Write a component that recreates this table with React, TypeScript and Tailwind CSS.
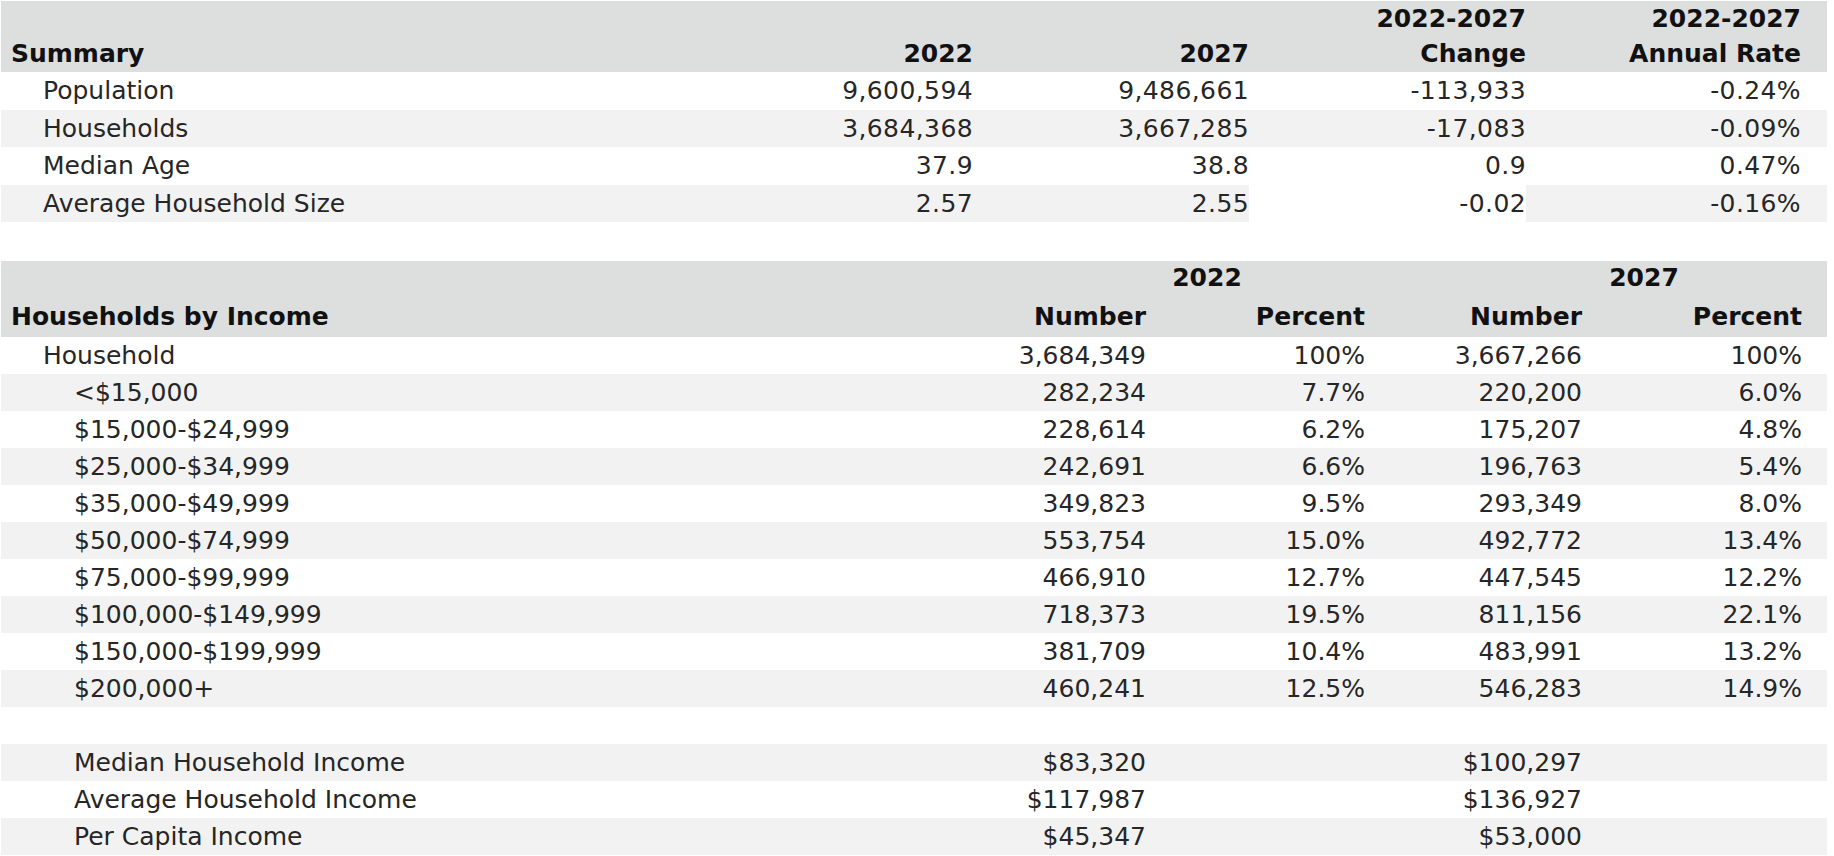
const font = "font-['DejaVu_Sans','Verdana',sans-serif]"

const summaryCols = 'grid grid-cols-[696px_276px_276px_277px_301px]'
const incomeCols = 'grid grid-cols-[926px_219px_219px_217px_245px]'

type SummaryRow = {
  label: string
  v2022: string
  v2027: string
  change: string
  rate: string
}

const summaryRows: SummaryRow[] = [
  { label: 'Population', v2022: '9,600,594', v2027: '9,486,661', change: '-113,933', rate: '-0.24%' },
  { label: 'Households', v2022: '3,684,368', v2027: '3,667,285', change: '-17,083', rate: '-0.09%' },
  { label: 'Median Age', v2022: '37.9', v2027: '38.8', change: '0.9', rate: '0.47%' },
  { label: 'Average Household Size', v2022: '2.57', v2027: '2.55', change: '-0.02', rate: '-0.16%' },
]

type IncomeRow = {
  label: string
  indent: 'pl-[42px]' | 'pl-[73px]'
  n2022: string
  p2022: string
  n2027: string
  p2027: string
}

const incomeRows: IncomeRow[] = [
  { label: 'Household', indent: 'pl-[42px]', n2022: '3,684,349', p2022: '100%', n2027: '3,667,266', p2027: '100%' },
  { label: '<$15,000', indent: 'pl-[73px]', n2022: '282,234', p2022: '7.7%', n2027: '220,200', p2027: '6.0%' },
  { label: '$15,000-$24,999', indent: 'pl-[73px]', n2022: '228,614', p2022: '6.2%', n2027: '175,207', p2027: '4.8%' },
  { label: '$25,000-$34,999', indent: 'pl-[73px]', n2022: '242,691', p2022: '6.6%', n2027: '196,763', p2027: '5.4%' },
  { label: '$35,000-$49,999', indent: 'pl-[73px]', n2022: '349,823', p2022: '9.5%', n2027: '293,349', p2027: '8.0%' },
  { label: '$50,000-$74,999', indent: 'pl-[73px]', n2022: '553,754', p2022: '15.0%', n2027: '492,772', p2027: '13.4%' },
  { label: '$75,000-$99,999', indent: 'pl-[73px]', n2022: '466,910', p2022: '12.7%', n2027: '447,545', p2027: '12.2%' },
  { label: '$100,000-$149,999', indent: 'pl-[73px]', n2022: '718,373', p2022: '19.5%', n2027: '811,156', p2027: '22.1%' },
  { label: '$150,000-$199,999', indent: 'pl-[73px]', n2022: '381,709', p2022: '10.4%', n2027: '483,991', p2027: '13.2%' },
  { label: '$200,000+', indent: 'pl-[73px]', n2022: '460,241', p2022: '12.5%', n2027: '546,283', p2027: '14.9%' },
]

const incomeSummary = [
  { label: 'Median Household Income', n2022: '$83,320', n2027: '$100,297' },
  { label: 'Average Household Income', n2022: '$117,987', n2027: '$136,927' },
  { label: 'Per Capita Income', n2022: '$45,347', n2027: '$53,000' },
]

function SummaryTable() {
  return (
    <div>
      <div className={`${summaryCols} h-[71px] items-end bg-[#dddede] pb-[3px] font-bold text-[#111]`}>
        <div className="pl-[10px] leading-[35px]">Summary</div>
        <div className="text-right leading-[35px]">2022</div>
        <div className="text-right leading-[35px]">2027</div>
        <div className="text-right leading-[35px]">
          2022-2027
          <br />
          Change
        </div>
        <div className="pr-[26px] text-right leading-[35px]">
          2022-2027
          <br />
          Annual Rate
        </div>
      </div>
      {summaryRows.map((row, i) => {
        const striped = i % 2 === 1
        const last = i === summaryRows.length - 1
        return (
          <div
            key={row.label}
            className={`${summaryCols} h-[37.5px] items-center ${striped ? 'bg-[#f2f2f2]' : 'bg-white'}`}
          >
            <div className="pl-[42px]">{row.label}</div>
            <div className="text-right tracking-[0.4px]">{row.v2022}</div>
            <div className="text-right tracking-[0.4px]">{row.v2027}</div>
            <div className={`flex h-full items-center justify-end tracking-[0.4px] ${last ? 'bg-white' : ''}`}>
              {row.change}
            </div>
            <div className="pr-[26px] text-right tracking-[0.4px]">{row.rate}</div>
          </div>
        )
      })}
    </div>
  )
}

function IncomeTable() {
  return (
    <div>
      <div className={`${incomeCols} h-[33px] items-end bg-[#dddede] font-bold text-[#111]`}>
        <div />
        <div className="col-span-2 pl-[122px] text-center leading-[33px]">2022</div>
        <div className="col-span-2 pl-[96px] text-center leading-[33px]">2027</div>
      </div>
      <div className={`${incomeCols} h-[43px] items-end bg-[#dddede] pb-[2px] font-bold text-[#111]`}>
        <div className="pl-[10px] leading-[37px]">Households by Income</div>
        <div className="text-right leading-[37px]">Number</div>
        <div className="text-right leading-[37px]">Percent</div>
        <div className="text-right leading-[37px]">Number</div>
        <div className="pr-[25px] text-right leading-[37px]">Percent</div>
      </div>
      {incomeRows.map((row, i) => (
        <div
          key={row.label}
          className={`${incomeCols} h-[37px] items-center ${i % 2 === 1 ? 'bg-[#f2f2f2]' : 'bg-white'}`}
        >
          <div className={row.indent}>{row.label}</div>
          <div className="text-right">{row.n2022}</div>
          <div className="text-right">{row.p2022}</div>
          <div className="text-right">{row.n2027}</div>
          <div className="pr-[25px] text-right">{row.p2027}</div>
        </div>
      ))}
      <div className="h-[37px] bg-white" />
      {incomeSummary.map((row, i) => (
        <div
          key={row.label}
          className={`${incomeCols} h-[37px] items-center ${i % 2 === 0 ? 'bg-[#f2f2f2]' : 'bg-white'}`}
        >
          <div className="pl-[73px]">{row.label}</div>
          <div className="text-right">{row.n2022}</div>
          <div />
          <div className="text-right">{row.n2027}</div>
          <div />
        </div>
      ))}
    </div>
  )
}

export default function App() {
  return (
    <div className={`h-[856px] w-[1834px] overflow-hidden bg-white ${font} text-[25px] text-[#262626]`}>
      <div className="ml-px mt-px flex w-[1826px] flex-col gap-[39px]">
        <SummaryTable />
        <IncomeTable />
      </div>
    </div>
  )
}
